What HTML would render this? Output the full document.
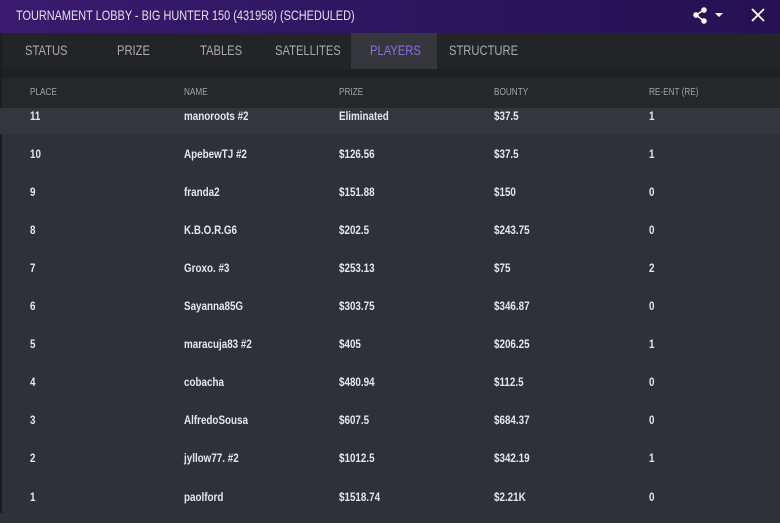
<!DOCTYPE html>
<html><head><style>
body{margin:0;width:780px;height:523px;overflow:hidden;background:#2e3137;font-family:"Liberation Sans",sans-serif;position:relative}
.title{position:absolute;left:0;top:0;width:780px;height:33px;background:linear-gradient(90deg,#3a1a6e,#2e1660 50%,#251152);color:#e4e0ec;font-size:14px;line-height:30px}
.title span{position:absolute;left:16px;transform:scaleX(0.78);transform-origin:left;white-space:nowrap}
.tabs{position:absolute;left:0;top:33px;width:780px;height:36px;background:#232427}
.tab{position:absolute;top:0;height:36px;line-height:35px;font-size:14px;color:#a9abb0;transform:scaleX(0.8);transform-origin:left;white-space:nowrap}
.active{position:absolute;left:351px;top:0;width:86px;height:36px;background:#36373c}
.hdr{position:absolute;left:0;top:78px;width:780px;height:30px;background:#26272b;font-size:10px;color:#a2a4a8}
.gap{position:absolute;left:0;top:69px;width:780px;height:9px;background:#1f2023}
.hdr div,.row div{position:absolute;transform:scaleX(0.82);transform-origin:left;white-space:nowrap}
.row{position:absolute;left:0;width:780px;height:38px;font-size:12px;color:#e6e7e9;font-weight:bold}
.c1{left:30px}.c2{left:184px}.c3{left:339px}.c4{left:494px}.c5{left:649px}
.edge{position:absolute;left:0;top:33px;width:2px;height:490px;background:#1c1d20}
</style></head><body>
<div class="title"><span>TOURNAMENT LOBBY - BIG HUNTER 150 (431958) (SCHEDULED)</span>
<svg style="position:absolute;left:692px;top:7px" width="40" height="18" viewBox="0 0 40 18"><g fill="#fff" stroke="#fff" stroke-width="1.5"><line x1="12" y1="3" x2="4" y2="8"/><line x1="4" y1="8" x2="12" y2="14"/><circle cx="12" cy="3" r="2"/><circle cx="4" cy="8" r="2"/><circle cx="12" cy="14" r="2"/></g><path d="M23 6h8l-4 4z" fill="#fff"/></svg>
<svg style="position:absolute;left:751px;top:8px" width="14" height="14"><path d="M1 1L13 13M13 1L1 13" stroke="#fff" stroke-width="1.8"/></svg>
</div>
<div class="tabs">
<div class="active"></div>
<div class="tab" style="left:25px">STATUS</div>
<div class="tab" style="left:117px">PRIZE</div>
<div class="tab" style="left:200px">TABLES</div>
<div class="tab" style="left:275px">SATELLITES</div>
<div class="tab" style="left:370px;color:#8b6fe0">PLAYERS</div>
<div class="tab" style="left:449px">STRUCTURE</div>
</div>
<div class="gap"></div>
<div class="hdr"><div class="c1" style="top:9px">PLACE</div><div class="c2" style="top:9px">NAME</div><div class="c3" style="top:9px">PRIZE</div><div class="c4" style="top:9px">BOUNTY</div><div class="c5" style="top:9px">RE-ENT (RE)</div></div>
<div class="edge"></div>
<div class="row" style="top:108px;height:26px;background:#33363c"><div class="c1" style="top:1px">11</div><div class="c2" style="top:1px">manoroots #2</div><div class="c3" style="top:1px">Eliminated</div><div class="c4" style="top:1px">$37.5</div><div class="c5" style="top:1px">1</div></div>
<div class="row" style="top:134px"><div class="c1" style="top:13px">10</div><div class="c2" style="top:13px">ApebewTJ #2</div><div class="c3" style="top:13px">$126.56</div><div class="c4" style="top:13px">$37.5</div><div class="c5" style="top:13px">1</div></div>
<div class="row" style="top:172px"><div class="c1" style="top:13px">9</div><div class="c2" style="top:13px">franda2</div><div class="c3" style="top:13px">$151.88</div><div class="c4" style="top:13px">$150</div><div class="c5" style="top:13px">0</div></div>
<div class="row" style="top:210px"><div class="c1" style="top:13px">8</div><div class="c2" style="top:13px">K.B.O.R.G6</div><div class="c3" style="top:13px">$202.5</div><div class="c4" style="top:13px">$243.75</div><div class="c5" style="top:13px">0</div></div>
<div class="row" style="top:248px"><div class="c1" style="top:13px">7</div><div class="c2" style="top:13px">Groxo. #3</div><div class="c3" style="top:13px">$253.13</div><div class="c4" style="top:13px">$75</div><div class="c5" style="top:13px">2</div></div>
<div class="row" style="top:286px"><div class="c1" style="top:13px">6</div><div class="c2" style="top:13px">Sayanna85G</div><div class="c3" style="top:13px">$303.75</div><div class="c4" style="top:13px">$346.87</div><div class="c5" style="top:13px">0</div></div>
<div class="row" style="top:324px"><div class="c1" style="top:13px">5</div><div class="c2" style="top:13px">maracuja83 #2</div><div class="c3" style="top:13px">$405</div><div class="c4" style="top:13px">$206.25</div><div class="c5" style="top:13px">1</div></div>
<div class="row" style="top:362px"><div class="c1" style="top:13px">4</div><div class="c2" style="top:13px">cobacha</div><div class="c3" style="top:13px">$480.94</div><div class="c4" style="top:13px">$112.5</div><div class="c5" style="top:13px">0</div></div>
<div class="row" style="top:400px"><div class="c1" style="top:13px">3</div><div class="c2" style="top:13px">AlfredoSousa</div><div class="c3" style="top:13px">$607.5</div><div class="c4" style="top:13px">$684.37</div><div class="c5" style="top:13px">0</div></div>
<div class="row" style="top:438px"><div class="c1" style="top:13px">2</div><div class="c2" style="top:13px">jyllow77. #2</div><div class="c3" style="top:13px">$1012.5</div><div class="c4" style="top:13px">$342.19</div><div class="c5" style="top:13px">1</div></div>
<div class="row" style="top:476px"><div class="c1" style="top:14px">1</div><div class="c2" style="top:14px">paolford</div><div class="c3" style="top:14px">$1518.74</div><div class="c4" style="top:14px">$2.21K</div><div class="c5" style="top:14px">0</div></div>
<div style="position:absolute;left:0;top:513px;width:780px;height:10px;background:#303238"></div>
</body></html>
